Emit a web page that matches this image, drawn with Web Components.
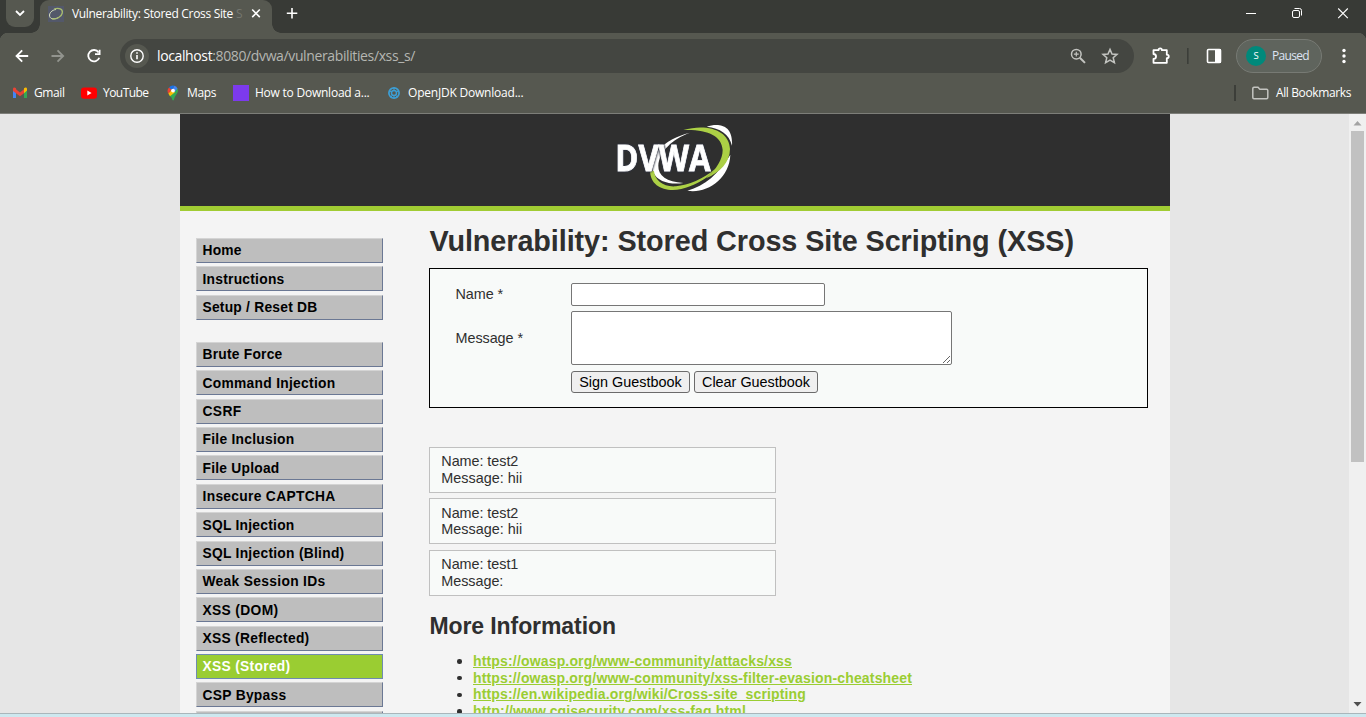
<!DOCTYPE html>
<html lang="en">
<head>
<meta charset="utf-8">
<title>Vulnerability: Stored Cross Site Scripting (XSS)</title>
<style>
html,body{margin:0;padding:0;height:100%;overflow:hidden;background:#e6e6e6}
</style>
</head>
<body>
<app-window></app-window>
<script>
const define = (name, html, init) => {
  const tpl = document.createElement('template');
  tpl.innerHTML = html;
  customElements.define(name, class extends HTMLElement {
    connectedCallback() {
      if (this.shadowRoot) return;
      this.attachShadow({mode: 'open'}).append(tpl.content.cloneNode(true));
      if (init) init(this, this.shadowRoot);
    }
  });
};

/* One line of text, tracked so that it takes exactly w pixels. */
define('fit-text', `<style>:host{display:block;white-space:nowrap;flex:none}</style><span><slot></slot></span>`,
  (el, root) => {
    const span = root.querySelector('span'), w = +el.getAttribute('w');
    const natural = span.getBoundingClientRect().width;
    const n = el.textContent.length;
    span.style.letterSpacing = ((w - natural) / n) + 'px';
    el.style.width = w + 'px';
  });

define('tab-strip', `<style>
:host{display:flex;height:33px;background:#383a36;color:#fff;font:12px/16px "Open Sans",sans-serif}
svg{display:block;flex:none}
.search{width:28px;height:27px;margin-left:6px;border-radius:0 0 9px 9px;background:#565850}
.tab{position:relative;display:flex;box-sizing:border-box;width:232px;height:33px;margin-left:6px;padding:6px 0 0 8px;border-radius:9px 9px 0 0;background:#565850}
.tab:before,.tab:after{content:"";position:absolute;bottom:0;width:9px;height:9px}
.tab:before{left:-9px;background:radial-gradient(circle at 0 0,#383a36 8.5px,#565850 9px)}
.tab:after{right:-9px;background:radial-gradient(circle at 100% 0,#383a36 8.5px,#565850 9px)}
.label{width:172px;flex:none;margin-left:8px;display:flex}
.gap{flex:1}
</style>
<svg class="search" viewBox="0 0 28 27"><path d="M10 11l4 4 4-4" fill="none" stroke="#fff" stroke-width="1.8"/></svg>
<div class="tab">
<svg width="16" height="16" viewBox="0 0 16 16"><path fill="#53586a" d="M0 0h16v16H0z"/><path d="M8 3.500C4 4 1 7 1.600 10.200 2.200 13.500 7 13.500 10.500 11.500" fill="none" stroke="#d8e0c0" stroke-width="1"/><path d="M6 3C11 1.500 15 3 14.300 7 13.500 11 8 13.600 4 12.800" fill="none" stroke="#a9bd6e" stroke-width="1.300"/></svg>
<div class="label"><fit-text w="161">Vulnerability: Stored Cross Site</fit-text><fit-text w="6" style="margin-left:3px;color:#75776f">S</fit-text></div>
<svg width="16" height="16" viewBox="0 0 16 16" style="margin-left:4px"><path d="M4.200 3.500l7.600 7.600M11.800 3.500l-7.600 7.600" stroke="#fff" stroke-width="1.600"/></svg>
</div>
<svg width="16" height="16" viewBox="0 0 16 16" style="margin:5px 0 0 12px"><path d="M8 3v10.500M2.800 8.200h10.500" stroke="#fff" stroke-width="1.600"/></svg>
<div class="gap"></div>
<svg width="138" height="27" viewBox="0 0 138 27" style="margin-right:0"><g fill="none" stroke="#fff"><path d="M18 13.500h10"/><rect x="64.500" y="10.500" width="7" height="7" rx="1.500"/><path d="M66.500 8.500h5a2 2 0 0 1 2 2v5"/><path d="M110.200 8.500l9.600 9.600M119.800 8.500l-9.600 9.600" stroke-width="1.100"/></g></svg>`);

define('tool-bar', `<style>
:host{display:grid;grid-template-columns:120px 1014px 53px 39px 1fr;height:46px;box-sizing:border-box;padding-top:6px;background:radial-gradient(circle at 8px 8px,#565850 8px,#383a36 8.500px) 0 0/8px 8px no-repeat,radial-gradient(circle at 0 8px,#565850 8px,#383a36 8.500px) 100% 0/8px 8px no-repeat,#565850;color:#fff;font:14px/20px "Open Sans",sans-serif}
svg{display:block;flex:none}
.omni{height:34px;border-radius:17px;background:#444641;display:flex;align-items:center;color:#b5b6b2}
.omni b{font-weight:400;color:#fff}
.pill{display:flex;align-items:center;box-sizing:border-box;width:86px;height:34px;margin-left:10px;border:1px solid #777a74;border-radius:17px;background:#5f645d;font-size:12px;font-weight:500;color:#dde3f3}
.av{width:20px;height:20px;line-height:19px;margin:0 6px 0 9px;border-radius:50%;background:#00897b;text-align:center;font-size:9.500px;color:#fff}
.end{display:flex}
</style>
<svg width="120" height="34" viewBox="0 0 120 34"><g fill="none" stroke-width="1.800"><path d="M28.200 17H17M22.200 11.300L16.500 17l5.700 5.700" stroke="#fff"/><path d="M51.500 17h11.200M57.500 11.300l5.700 5.700-5.700 5.700" stroke="#92948e"/><path d="M98.600 13.400A5.700 5.700 0 1 0 99.300 18.700" stroke="#fff"/><path d="M99.600 10.800v4.400h-4.600" stroke="#fff"/></g></svg>
<div class="omni">
<svg width="37" height="34" viewBox="0 0 37 34"><circle cx="17" cy="17" r="12" fill="#565850"/><circle cx="17" cy="17" r="6.200" fill="none" stroke="#fff" stroke-width="1.400"/><path d="M17 16v4.200M17 13.200v1.600" stroke="#fff" stroke-width="1.600"/></svg>
<fit-text w="258"><b>localhost</b>:8080/dvwa/vulnerabilities/xss_s/</fit-text>
<svg width="60" height="34" viewBox="0 0 60 34" style="margin-left:649px"><g fill="none" stroke="#c3c4c0" stroke-width="1.500"><circle cx="12.300" cy="15.200" r="4.800"/><path d="M15.800 18.700l5.200 5.200" stroke-width="2"/><path d="M12.300 12.800v4.800M9.900 15.200h4.800" stroke-width="1.200"/><path d="M46 10.400l2 4.600 5 .4-3.800 3.300 1.200 4.900-4.400-2.600-4.400 2.600 1.200-4.900-3.800-3.300 5-.4z"/></g></svg>
</div>
<svg width="53" height="34" viewBox="0 0 53 34"><path d="M19.500 11.200h5c0-2.500 3.400-2.500 3.400 0h4.900v4.500c2.600 0 2.600 3.400 0 3.400v4.700H19.500v-3.800c3.400-.3 3.400-4.700 0-5z" fill="none" stroke="#fff" stroke-width="1.800" stroke-linejoin="round"/></svg>
<svg width="39" height="34" viewBox="0 0 39 34"><path d="M0 9h1.600v16H0z" fill="#3c3e39"/><rect x="20.500" y="10.500" width="13" height="13" rx="1" fill="none" stroke="#fff" stroke-width="1.600"/><path d="M28 10h6v14h-6z" fill="#fff"/></svg>
<div class="end"><div class="pill"><div class="av">S</div><fit-text w="37">Paused</fit-text></div>
<svg width="44" height="34" viewBox="0 0 44 34"><g fill="#fff"><circle cx="22" cy="11.500" r="1.700"/><circle cx="22" cy="17" r="1.700"/><circle cx="22" cy="22.500" r="1.700"/></g></svg></div>`);

define('book-mark', `<style>:host{display:flex;align-items:center;flex:none}::slotted(svg){display:block;margin-right:6px}</style><slot name="icon"></slot><slot></slot>`);

define('bookmarks-bar', `<style>
:host{display:flex;align-items:center;box-sizing:border-box;height:35px;padding:0 15px 7px 12px;background:#565850;border-bottom:1px solid #7d7e79;color:#fff;font:500 12px/16px "Open Sans",sans-serif}
.gap{flex:1}.rule{width:2px;height:16px;margin-right:15px;background:#3c3e39}
</style>
<book-mark><svg slot="icon" width="16" height="16" viewBox="0 0 16 16"><path fill="#4285f4" d="M1 4v9h3V7z"/><path fill="#34a853" d="M15 4v9h-3V7z"/><path fill="#ea4335" d="M4 4.200l4 3.200 4-3.200v4L8 11.300 4 8.200z"/><path fill="#ea4335" d="M1 6V4c0-1.700 1.700-2 3-.7v5z"/><path fill="#fbbc04" d="M15 5.500V4c0-1.700-1.700-2-3-.7v5z"/></svg><fit-text w="30.5">Gmail</fit-text></book-mark>
<book-mark style="margin-left:16.500px"><svg slot="icon" width="16" height="16" viewBox="0 0 16 16"><rect y="2.500" width="16" height="11.300" rx="3" fill="#f00"/><path fill="#fff" d="M6.300 5.600v5l4.300-2.500z"/></svg><fit-text w="45.5">YouTube</fit-text></book-mark>
<book-mark style="margin-left:16.500px"><svg slot="icon" width="16" height="16" viewBox="0 0 16 16"><path fill="#34a853" d="M4 10l8.500-6.500c2 4-2.400 6.500-3.200 10-.5 2.500-1.900 2.500-2.400 0C6.500 12 5 11.500 4 10z"/><path fill="#fbbc04" d="M3.300 8.500L7 4.500l3 2.800-5 4z"/><path fill="#4285f4" d="M7 4.500L9.500.8a5 5 0 0 1 3 2.700L9.800 7z"/><path fill="#1a73e8" d="M4 2.500A5.200 5.200 0 0 1 9.600.8L6.300 5z"/><path fill="#ea4335" d="M4 2.500l2.500 2.300-3.200 3.800A5.200 5.200 0 0 1 4 2.500z"/><circle cx="8" cy="5.600" r="1.900" fill="#fff"/></svg><fit-text w="29">Maps</fit-text></book-mark>
<book-mark style="margin-left:17px"><svg slot="icon" width="16" height="16" viewBox="0 0 16 16"><path fill="#7c3aed" d="M0 0h16v16H0z"/></svg><fit-text w="114.5">How to Download a...</fit-text></book-mark>
<book-mark style="margin-left:16.500px"><svg slot="icon" width="16" height="16" viewBox="0 0 16 16"><g fill="none" stroke="#3c9fd6"><circle cx="8" cy="8" r="5.100" stroke-width="1.700"/><circle cx="8" cy="8" r="2.500" stroke-width="1.400"/><path d="M8 2.500v3M8 10.600v3M3 6l2.600 1M13 6l-2.600 1M4.700 12.500l1.800-2.400M11.300 12.500l-1.800-2.400"/></g></svg><fit-text w="115.5">OpenJDK Download...</fit-text></book-mark>
<div class="gap"></div><div class="rule"></div>
<svg width="18" height="16" viewBox="0 0 18 16" style="margin-right:7px"><path d="M1.800 3.500c0-.8.400-1.200 1.200-1.200h4l1.800 2h6.800c.8 0 1.200.4 1.200 1.200v7c0 .8-.4 1.200-1.200 1.200H3c-.8 0-1.200-.4-1.200-1.200z" fill="none" stroke="#c3c4c0" stroke-width="1.500"/></svg>
<fit-text w="75">All Bookmarks</fit-text>`);

define('dvwa-logo', `<style>:host{display:block;width:116px;height:69px}svg{display:block}text{font:700 109px "Open Sans",sans-serif;filter:drop-shadow(0 0 2.500px #2f3340) drop-shadow(0 0 2px #2f3340)}</style>
<svg width="117" height="69" viewBox="51 30 351 207">
<path fill="#fff" d="M270 56C190 75 138 130 160 175C172 205 215 213 250 207C200 203 174 185 175 155C177 115 215 75 270 56z"/>
<path fill="#fff" d="M320 38C355 27 400 30 396 95C388 60 360 42 320 38z"/>
<path fill="#fff" d="M391 122C388 195 320 240 262 230C315 215 355 180 391 122z"/>
<path fill="#acd045" d="M250 48C320 28 388 48 390 105C390 145 360 175 318 193C350 165 368 135 368 108C366 65 320 45 250 48z"/>
<path fill="#acd045" d="M150 168C150 228 215 240 270 217C300 205 330 187 345 165C310 195 265 213 228 217C190 220 165 200 162 172z"/>
<text x="46" y="169.500" fill="#fff" stroke="#fff" stroke-width="2.500" textLength="286" lengthAdjust="spacingAndGlyphs">DVWA</text>
</svg>`);

define('menu-item', `<style>
:host{display:block;box-sizing:border-box;width:187px;height:25px;margin-bottom:3.380px;padding:4.300px 0 0 5.500px;border:1px solid;border-color:#d4d4d4 #6b7894 #6b7894 #d4d4d4;background:#bebebe;color:#000;font:700 13.800px/16px "Liberation Sans",Arial,sans-serif}
:host([selected]){background:#9acd32;border-color:#6f8bb0;color:#fff}
</style><slot></slot>`);

define('main-menu', `<style>:host{display:block;width:187px;padding:27px 0 0 16px}.group{margin-bottom:22.240px}</style>
<div class="group"></div><div class="group" style="margin:0"></div>`, (el, root) => {
  const groups = [
    [['Home',39],['Instructions',82],['Setup / Reset DB',115]],
    [['Brute Force',80],['Command Injection',133],['CSRF',39],['File Inclusion',92],['File Upload',77],['Insecure CAPTCHA',133],['SQL Injection',92],['SQL Injection (Blind)',142],['Weak Session IDs',123],['XSS (DOM)',76],['XSS (Reflected)',107],['XSS (Stored)',88],['CSP Bypass',84],null]
  ];
  root.querySelectorAll('.group').forEach((g, i) => {
    for (const entry of groups[i]) {
      const item = document.createElement('menu-item');
      g.append(item);
      if (!entry) continue;
      const [label, w] = entry;
      if (label === 'XSS (Stored)') item.setAttribute('selected', '');
      const text = document.createElement('fit-text');
      text.setAttribute('w', w);
      text.textContent = label;
      item.append(text);
    }
  });
});

define('guestbook-form', `<style>
:host{display:grid;grid-template-columns:115.500px 1fr;grid-template-rows:23px 54px 22px;row-gap:5px;box-sizing:border-box;width:719px;height:140px;padding:14px 0 0 25.500px;border:1px solid #000;background:#f8faf9;align-items:center}
input,textarea{display:block;box-sizing:border-box;margin:0;border:1px solid #767676;border-radius:2px;background:#fff;outline:none}
input{width:254px;height:23px}textarea{width:381px;height:54px;resize:both}
.btns{grid-column:2;display:flex;gap:4px;padding-top:2px}
button{box-sizing:border-box;height:22px;padding:0;border:1px solid #6b6b6b;border-radius:3px;background:#efefef;color:#000;font:14.400px/18px "Liberation Sans",Arial,sans-serif;display:flex;justify-content:center;align-items:center}
</style>
<fit-text w="47.5">Name *</fit-text><input>
<fit-text w="67.5">Message *</fit-text><textarea></textarea>
<div class="btns"><button style="width:119px"><fit-text w="102.5">Sign Guestbook</fit-text></button><button style="width:124px"><fit-text w="108">Clear Guestbook</fit-text></button></div>`);

define('guest-entry', `<style>:host{display:block;box-sizing:border-box;width:347px;height:46px;margin-bottom:5.400px;padding:5.150px 0 0 11.300px;border:1px solid #c0c0c0;background:#f8faf9;line-height:16.800px}</style><slot></slot>`);

define('vulnerable-page', `<style>
:host{display:block;flex:1;padding:13px 22px 0 46px;color:#2f2f2f;font:14.400px/16.800px "Liberation Sans",Arial,sans-serif}
h1,h2{margin:0;font-weight:700}
h1{font-size:28.800px;line-height:34px;height:44px}
h1 fit-text,h2 fit-text{margin-left:.4px}
h2{font-size:23px;line-height:26px;margin-top:17.500px}
.book{padding-top:39px}
ul{list-style:none;margin:14px 0 0;padding:0 0 0 28px}
li{display:flex;align-items:center;height:16.600px}
li:before{content:"";width:4.500px;height:4.500px;margin-right:11.500px;border-radius:50%;background:#2f2f2f}
a{color:#9acd32;font-weight:700;font-size:14px;text-decoration:underline}
</style>
<h1><fit-text w="644.5">Vulnerability: Stored Cross Site Scripting (XSS)</fit-text></h1>
<guestbook-form></guestbook-form>
<div class="book">
<guest-entry><fit-text w="77">Name: test2</fit-text><fit-text w="81">Message: hii</fit-text></guest-entry>
<guest-entry><fit-text w="77">Name: test2</fit-text><fit-text w="81">Message: hii</fit-text></guest-entry>
<guest-entry><fit-text w="77">Name: test1</fit-text><fit-text w="62">Message:</fit-text></guest-entry>
</div>
<h2><fit-text w="186.5">More Information</fit-text></h2>
<ul>
<li><a><fit-text w="319">https://owasp.org/www-community/attacks/xss</fit-text></a></li>
<li><a><fit-text w="439">https://owasp.org/www-community/xss-filter-evasion-cheatsheet</fit-text></a></li>
<li><a><fit-text w="333">https://en.wikipedia.org/wiki/Cross-site_scripting</fit-text></a></li>
<li><a><fit-text w="273">http://www.cgisecurity.com/xss-faq.html</fit-text></a></li>
</ul>`);

define('scroll-bar', `<style>
:host{display:flex;flex-direction:column;align-items:center;width:17px;background:#f0f0f0}
svg{display:block;flex:none}.thumb{width:13px;height:331px;background:#c1c1c1}.rest{flex:1}
</style>
<svg width="17" height="17"><path d="M4.500 11.500L8.500 7l4 4.500z" fill="#a3a3a3"/></svg><div class="thumb"></div><div class="rest"></div>
<svg width="17" height="17"><path d="M4.500 6L8.500 10.500l4-4.500z" fill="#505050"/></svg>`);

define('app-window', `<style>
:host{display:flex;flex-direction:column;width:1366px;height:717px;overflow:hidden}
.view{display:flex;height:599px;background:#e6e6e6;overflow:hidden}
.page{width:990px;height:599px;overflow:hidden;margin:0 179px 0 180px;background:#f4f4f4;flex:none}
header{box-sizing:border-box;height:97px;padding:10px 0 0 437px;background:#2f2f2f;border-bottom:5px solid #a1cc33}
.cols{display:flex}
footer{height:3px;border-top:1px solid #a9b6bb;background:#cde8ef}
</style>
<tab-strip></tab-strip><tool-bar></tool-bar><bookmarks-bar></bookmarks-bar>
<div class="view"><div class="page"><header><dvwa-logo></dvwa-logo></header><div class="cols"><main-menu></main-menu><vulnerable-page></vulnerable-page></div></div><scroll-bar></scroll-bar></div>
<footer></footer>`);
</script>
</body>
</html>
